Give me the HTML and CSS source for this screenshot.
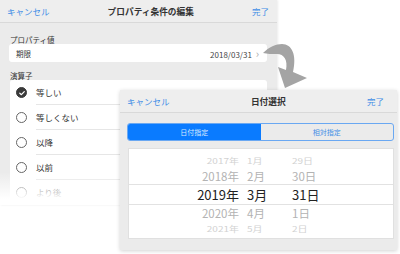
FILE: index.html
```html
<!DOCTYPE html>
<html lang="ja">
<head>
    <meta charset="UTF-8">
    <title>プロパティ条件の編集</title>
    <link rel="stylesheet" href="styles.css">
</head>
<body>
    <div class="scene">
        <div class="sheet back">
            <div class="navbar">
                <span class="nav-link">キャンセル</span>
                <span class="nav-title">プロパティ条件の編集</span>
                <span class="nav-link">完了</span>
            </div>

            <div class="group-label">プロパティ値</div>
            <div class="field">
                <span>期限</span>
                <span class="field-value">2018/03/31 <span class="chevron">›</span></span>
            </div>

            <div class="group-label">演算子</div>
            <div class="options">
                <div class="option">
                    <span class="radio checked">
                        <svg viewBox="0 0 10 10" width="10" height="10"><path d="M2.8 5.2 L4.4 6.7 L7.3 3.6" fill="none" stroke="#fff" stroke-width="1.2" stroke-linecap="round" stroke-linejoin="round"/></svg>
                    </span>
                    <span class="option-text">等しい</span>
                </div>
                <div class="option">
                    <span class="radio"></span>
                    <span class="option-text">等しくない</span>
                </div>
                <div class="option">
                    <span class="radio"></span>
                    <span class="option-text">以降</span>
                </div>
                <div class="option">
                    <span class="radio"></span>
                    <span class="option-text">以前</span>
                </div>
                <div class="option">
                    <span class="radio"></span>
                    <span class="option-text">より後</span>
                </div>
            </div>
        </div>

        <svg class="arrow" viewBox="0 0 60 60" width="60" height="60">
            <path d="M8,18 C14,12 21,9 27,9 C37,9 42,20 38,37 L52,43 L30,53 L23,32 L31,35 C33,25 29,19 22,19 C17,19 12,19 8,18 Z" fill="#a4a4a4"/>
        </svg>

        <div class="sheet front">
            <div class="navbar">
                <span class="nav-link">キャンセル</span>
                <span class="nav-title">日付選択</span>
                <span class="nav-link">完了</span>
            </div>

            <div class="segmented">
                <span class="segment active">日付指定</span>
                <span class="segment">相対指定</span>
            </div>

            <div class="picker">
                <div class="picker-row far">
                    <span class="col-year">2017年</span><span class="col-month">1月</span><span class="col-day">29日</span>
                </div>
                <div class="picker-row near">
                    <span class="col-year">2018年</span><span class="col-month">2月</span><span class="col-day">30日</span>
                </div>
                <div class="picker-row selected">
                    <span class="col-year">2019年</span><span class="col-month">3月</span><span class="col-day">31日</span>
                </div>
                <div class="picker-row near">
                    <span class="col-year">2020年</span><span class="col-month">4月</span><span class="col-day">1日</span>
                </div>
                <div class="picker-row far">
                    <span class="col-year">2021年</span><span class="col-month">5月</span><span class="col-day">2日</span>
                </div>
            </div>
        </div>
    </div>
</body>
</html>
```

FILE: styles.css
```css
body {
    margin: 0;
    background: #fff;
    font-family: "Noto Sans CJK JP", "Noto Sans", sans-serif;
    color: #333;
}

.scene {
    position: relative;
    width: 400px;
    height: 254px;
    overflow: hidden;
}

.sheet {
    background: #ebebeb;
    width: 277px;
    display: flex;
    flex-direction: column;
}

.back {
    position: relative;
    height: 205px;
    overflow: hidden;
    box-shadow: 1px 0 2px rgba(0, 0, 0, 0.08);
}

/* white fade over the lower part of the back sheet */
.back::after {
    content: "";
    position: absolute;
    left: 0;
    right: 0;
    top: 0;
    bottom: 0;
    background: linear-gradient(to bottom, rgba(255, 255, 255, 0) 172px, #fff 199px);
}

.navbar {
    height: 22px;
    flex: none;
    display: flex;
    align-items: center;
    justify-content: space-between;
    padding: 0 8px 0 7px;
    border-bottom: 1px solid #d9d9d9;
    background: #eeeeee;
    font-size: 8.5px;
}

.nav-link {
    color: #3f8de6;
}

.nav-title {
    font-weight: bold;
    color: #333;
    font-size: 8.7px;
}

.group-label {
    font-size: 7.5px;
    line-height: 9px;
    padding: 12px 10px 0 10px;
    color: #333;
}

.field + .group-label {
    padding-top: 9px;
}

.field {
    background: #fff;
    height: 19px;
    margin: 0 10px 0 9px;
    border-radius: 3px;
    display: flex;
    align-items: center;
    justify-content: space-between;
    padding: 0 8px 0 7px;
    font-size: 7.5px;
    color: #333;
}

.field-value {
    font-size: 8px;
    color: #444;
}

.chevron {
    color: #aaa;
    font-size: 11px;
    margin-left: 2px;
}

.options {
    background: #fff;
    margin: 0 10px;
    border-radius: 3px;
}

.option {
    display: flex;
    align-items: center;
}

.radio {
    width: 9px;
    height: 9px;
    border: 1px solid #666;
    border-radius: 50%;
    margin: 0 9px 0 6px;
    flex: none;
    display: flex;
}

.radio.checked {
    background: #3a3a3a;
    border-color: #3a3a3a;
}

.radio svg {
    margin: -0.5px;
}

.option-text {
    flex: 1;
    height: 24px;
    line-height: 24px;
    border-bottom: 1px solid #e6e6e6;
    font-size: 8.5px;
    color: #333;
}

.arrow {
    position: absolute;
    left: 255px;
    top: 35px;
}

.front {
    position: absolute;
    left: 120px;
    top: 90px;
    height: 160px;
    box-shadow: 0 1px 4px rgba(0, 0, 0, 0.18);
}

.front .navbar {
    padding: 0 13px 0 7px;
}

.segmented {
    display: flex;
    margin: 10px 3px 0 7px;
    height: 18px;
    border: 1px solid #6aa8f2;
    border-radius: 3px;
    overflow: hidden;
    box-sizing: border-box;
}

.segment {
    flex: 1;
    display: flex;
    align-items: center;
    justify-content: center;
    font-size: 7px;
    color: #3f8de6;
}

.segment.active {
    background: #0a7bff;
    color: #d8eaff;
}

.picker {
    margin: 7px 3px 0 8px;
    height: 91px;
    background: #fff;
    border: 1px solid #e0e0e0;
    box-sizing: border-box;
    padding-top: 4px;
}

.picker-row {
    display: flex;
    align-items: center;
}

.col-year {
    width: 110px;
    text-align: right;
}

.col-month {
    width: 45px;
    padding-left: 8px;
}

.col-day {
    flex: 1;
}

.picker-row.far {
    height: 15px;
    font-size: 10px;
    color: #d2d2d2;
    transform: scaleY(0.8);
}

.picker-row.near {
    height: 16px;
    font-size: 11.5px;
    color: #b3b3b3;
}

.picker-row.selected {
    height: 19px;
    font-size: 13px;
    color: #222;
    border-top: 1px solid #e2e2e2;
    border-bottom: 1px solid #e2e2e2;
}
```
